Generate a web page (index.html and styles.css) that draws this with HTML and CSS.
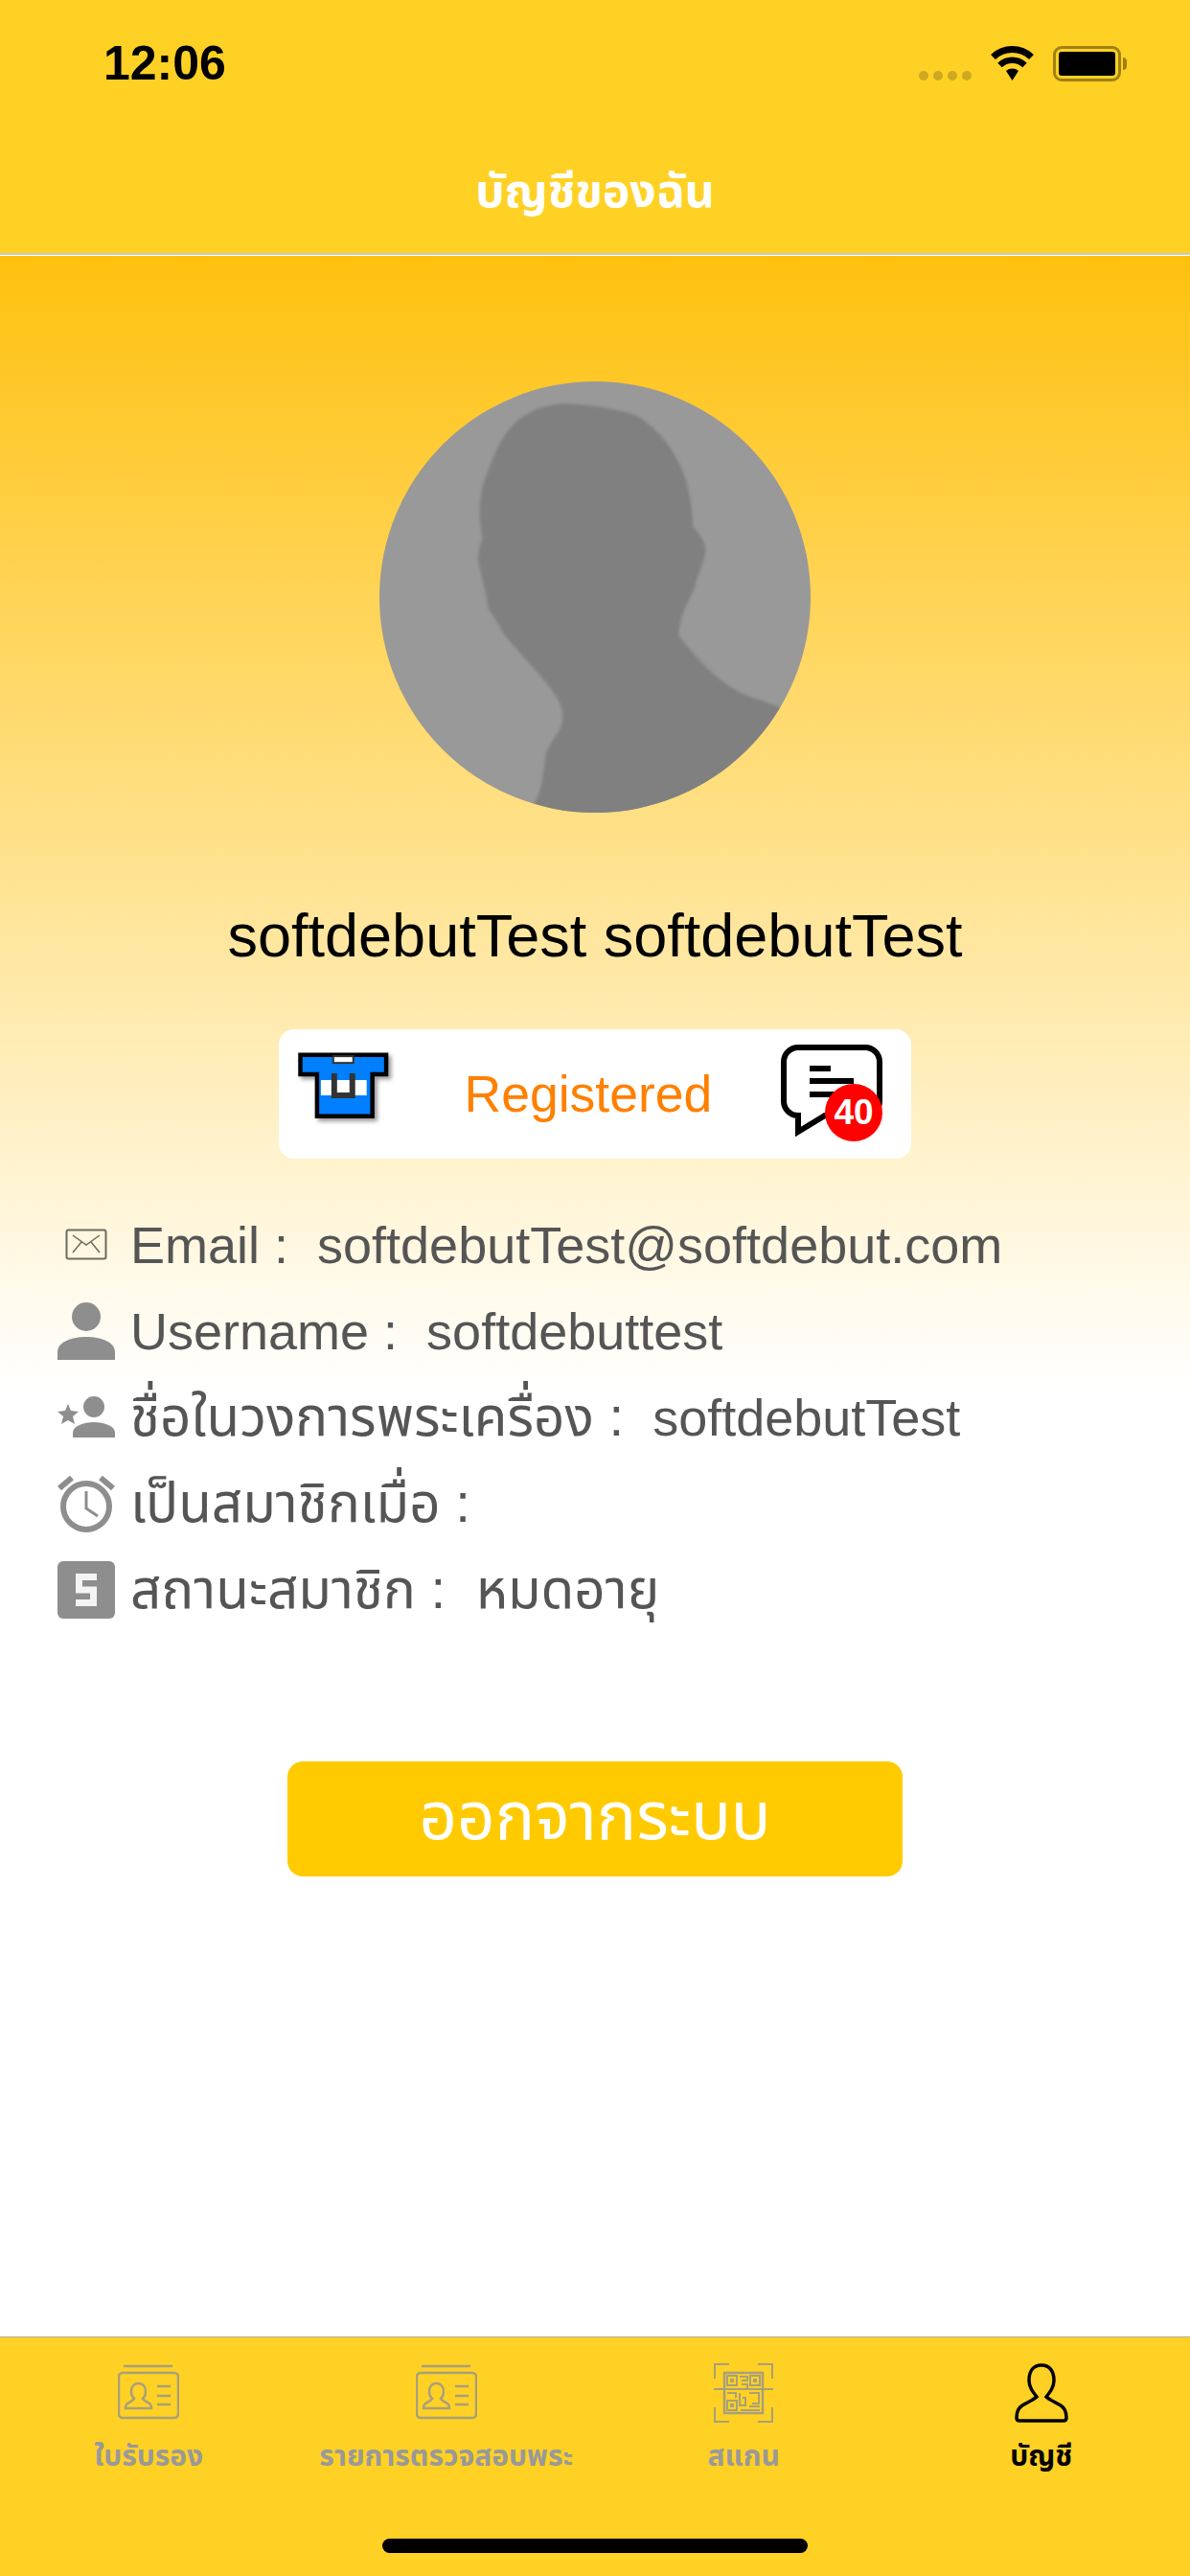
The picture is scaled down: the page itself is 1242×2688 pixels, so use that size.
FILE: index.html
```html
<!DOCTYPE html>
<html lang="th">
<head>
    <meta charset="UTF-8">
    <title>บัญชีของฉัน</title>
    <link rel="stylesheet" href="styles.css">
</head>
<body>
    <div class="top-bar">
        <div class="status-bar">
            <span class="clock">12:06</span>
            <div class="status-icons">
                <div class="signal"><i></i><i></i><i></i><i></i></div>
                <svg class="wifi" width="47" height="36" viewBox="0 0 47 36">
                    <path d="M3.500 11.500a29 29 0 0 1 40 0" fill="none" stroke="#000" stroke-width="7"/>
                    <path d="M10.500 20a19 19 0 0 1 26 0" fill="none" stroke="#000" stroke-width="6.500"/>
                    <path d="M17 26a10 10 0 0 1 13 0L23.500 36z" fill="#000"/>
                </svg>
                <div class="battery"><div class="battery-fill"></div></div>
            </div>
        </div>
        <div class="page-title">บัญชีของฉัน</div>
    </div>

    <div class="content">
        <svg class="avatar" width="450" height="450" viewBox="48 55 1350 1350">
            <defs><clipPath id="avatar-clip"><circle cx="723" cy="730" r="675"/></clipPath></defs>
            <g clip-path="url(#avatar-clip)">
                <rect x="48" y="55" width="1350" height="1350" fill="#999"/>
                <path class="silhouette" fill="#808080" d="M530 1380C555 1340 560 1300 565 1250C570 1200 590 1180 610 1150C630 1110 625 1080 600 1040C570 990 500 920 440 850C420 820 410 790 390 770C385 720 370 680 358 620C355 590 365 560 372 545C360 500 358 440 372 380C395 310 420 250 450 210C490 160 540 135 610 125C680 122 780 140 850 160C900 190 950 240 980 300C1010 350 1025 420 1030 510C1050 530 1070 560 1070 590C1060 630 1045 660 1035 700C1020 740 990 780 985 850C1040 920 1100 990 1180 1030C1220 1050 1270 1060 1300 1075L1420 1120L1420 1440L530 1440Z"/>
            </g>
        </svg>

        <div class="full-name">softdebutTest softdebutTest</div>

        <div class="status-card">
            <svg class="shirt" width="95" height="70" viewBox="0 0 95 70">
                <path d="M2.500 2.500H92.500V23H78V67H20V23H2.500z" fill="#007fff" stroke="#000" stroke-width="4.500"/>
                <rect x="24" y="29" width="48" height="16" fill="#fff"/>
                <rect x="37" y="4" width="21" height="7" fill="#fff" stroke="#333" stroke-width="2"/>
                <path d="M38 22V45H57V22" fill="none" stroke="#333" stroke-width="6"/>
            </svg>
            <span class="status-text">Registered</span>
            <div class="chat">
                <svg width="106" height="97" viewBox="0 0 106 97">
                    <path d="M18 3H88a15 15 0 0 1 15 15v41a15 15 0 0 1-15 15H46L18 91V74a15 15 0 0 1-15-15V18A15 15 0 0 1 18 3z" fill="#fff" stroke="#000" stroke-width="6"/>
                    <path d="M30 25h22M30 38h46M30 52h46" stroke="#000" stroke-width="6"/>
                </svg>
                <span class="chat-badge">40</span>
            </div>
        </div>

        <div class="info-list">
            <div class="info-row">
                <svg class="info-icon" width="60" height="60" viewBox="0 0 60 60">
                    <rect x="9.500" y="14.500" width="41" height="30" rx="2" fill="none" stroke="#6b6b60" stroke-width="2"/>
                    <path d="M16 20l14 10 14-10M16 38l9-11M44 38l-9-11" fill="none" stroke="#6b6b60" stroke-width="1.500"/>
                </svg>
                <span>Email :&nbsp; softdebutTest@softdebut.com</span>
            </div>
            <div class="info-row">
                <svg class="info-icon" width="60" height="60" viewBox="0 0 60 60">
                    <circle cx="30" cy="15" r="15" fill="#8e8e8e"/>
                    <path d="M0 60V52C0 41 15 36 30 36S60 41 60 52V60z" fill="#8e8e8e"/>
                </svg>
                <span>Username :&nbsp; softdebuttest</span>
            </div>
            <div class="info-row">
                <svg class="info-icon" width="60" height="60" viewBox="0 0 60 60">
                    <circle cx="38" cy="19" r="11" fill="#8e8e8e"/>
                    <path d="M16 51V46C16 39 27 35 38 35S60 39 60 46V51z" fill="#8e8e8e"/>
                    <path d="M11 16l3 7 8 1-6 5 2 8-7-4-7 4 2-8-6-5 8-1z" fill="#8e8e8e"/>
                </svg>
                <span><span class="th">ชื่อในวงการพระเครื่อง :</span>&nbsp; softdebutTest</span>
            </div>
            <div class="info-row">
                <svg class="info-icon" width="60" height="60" viewBox="0 0 60 60">
                    <circle cx="30" cy="33" r="24" fill="none" stroke="#8e8e8e" stroke-width="6"/>
                    <path d="M2 14L15 3M58 14L45 3" stroke="#8e8e8e" stroke-width="6"/>
                    <path d="M30 17V35L42 43" fill="none" stroke="#8e8e8e" stroke-width="3"/>
                </svg>
                <span class="th">เป็นสมาชิกเมื่อ :</span>
            </div>
            <div class="info-row">
                <svg class="info-icon" width="60" height="60" viewBox="0 0 60 60">
                    <rect width="60" height="60" rx="6" fill="#8e8e8e"/>
                    <path d="M41 16.500H22.500V30H37.500V43.500H19" fill="none" stroke="#f4f4f4" stroke-width="7"/>
                </svg>
                <span class="th">สถานะสมาชิก :&nbsp; หมดอายุ</span>
            </div>
        </div>

        <button class="logout-btn">ออกจากระบบ</button>
    </div>

    <div class="tab-bar">
        <div class="tab">
            <svg class="tab-icon" width="64" height="62" viewBox="0 0 64 62">
                <path d="M6 3H57" stroke="#a8a07a" stroke-width="2.500"/>
                <rect x="1" y="10" width="62" height="47" rx="4" fill="none" stroke="#a8a07a" stroke-width="2.500"/>
                <path d="M21.500 21c-5 0-7.500 4-7.500 9 0 3 1 5 3 7-2 3-7 4-8 6-1 2-1 3-1 4h27c0-1 0-2-1-4-1-2-6-3-8-6 2-2 3-4 3-7 0-5-2.500-9-7.500-9z" fill="none" stroke="#a8a07a" stroke-width="2.500"/>
                <path d="M41 24h14M41 34h14M41 43h14" stroke="#a8a07a" stroke-width="2.500"/>
            </svg>
            <span class="tab-label">ใบรับรอง</span>
        </div>
        <div class="tab">
            <svg class="tab-icon" width="64" height="62" viewBox="0 0 64 62">
                <path d="M6 3H57" stroke="#a8a07a" stroke-width="2.500"/>
                <rect x="1" y="10" width="62" height="47" rx="4" fill="none" stroke="#a8a07a" stroke-width="2.500"/>
                <path d="M21.500 21c-5 0-7.500 4-7.500 9 0 3 1 5 3 7-2 3-7 4-8 6-1 2-1 3-1 4h27c0-1 0-2-1-4-1-2-6-3-8-6 2-2 3-4 3-7 0-5-2.500-9-7.500-9z" fill="none" stroke="#a8a07a" stroke-width="2.500"/>
                <path d="M41 24h14M41 34h14M41 43h14" stroke="#a8a07a" stroke-width="2.500"/>
            </svg>
            <span class="tab-label">รายการตรวจสอบพระ</span>
        </div>
        <div class="tab">
            <svg class="tab-icon" width="62" height="62" viewBox="0 0 62 62">
                <path d="M16 1H1V16M46 1H61V16M16 61H1V46M46 61H61V46M0 27H62" fill="none" stroke="#a8a07a" stroke-width="2"/>
                <rect x="11" y="10" width="40" height="42" fill="none" stroke="#a8a07a" stroke-width="2.500"/>
                <path d="M14 13h10v10h-10zM38 13h10v10h-10zM14 39h10v10h-10zM18 17h2v2h-2zM42 17h2v2h-2zM18 43h2v2h-2zM27 14h8v4h-6M29 22h6v5M14 31h9v5M27 31v13h6v-8h-3M37 31h10v11h-7M28 49h20M37 45h11" fill="none" stroke="#a8a07a" stroke-width="2"/>
            </svg>
            <span class="tab-label">สแกน</span>
        </div>
        <div class="tab tab-active">
            <svg class="tab-icon" width="56" height="62" viewBox="0 0 56 62">
                <path d="M28 2C19 2 15 9 15 18c0 7 4 12 8 17c-3 3-10 6-15 9-5 3-6 9-6 13 0 2 1 3 3 3h46c2 0 3-1 3-3 0-4-1-10-6-13-5-3-12-6-15-9 4-5 8-10 8-17C41 9 37 2 28 2z" fill="none" stroke="#000" stroke-width="3.500"/>
            </svg>
            <span class="tab-label">บัญชี</span>
        </div>
        <div class="home-bar"></div>
    </div>
</body>
</html>
```

FILE: styles.css
```css
html, body {
    margin: 0;
    padding: 0;
}

body {
    width: 1242px;
    height: 2688px;
    overflow: hidden;
    display: flex;
    flex-direction: column;
    font-family: "Liberation Sans", "Noto Sans Thai", "Noto Sans", sans-serif;
    background: #fff;
}

.top-bar {
    height: 264px;
    background: #ffd124;
    border-bottom: 2px solid #c9c9c0;
    box-shadow: 0 1px 0 #fff;
    position: relative;
}

.status-bar {
    height: 132px;
    padding: 0 72px 0 108px;
    display: flex;
    align-items: center;
    justify-content: space-between;
}

.clock {
    font-size: 50px;
    font-weight: 700;
    color: #000;
}

.status-icons {
    display: flex;
    align-items: center;
    gap: 19px;
}

.signal {
    display: flex;
    gap: 5px;
    align-self: flex-end;
    margin-bottom: 1px;
}

.signal i {
    width: 10px;
    height: 10px;
    border-radius: 50%;
    background: #cfa821;
}

.battery {
    width: 71px;
    height: 37px;
    box-sizing: border-box;
    border: 3px solid #a08012;
    border-radius: 9px;
    padding: 3px;
    position: relative;
}

.battery::after {
    content: "";
    position: absolute;
    right: -9px;
    top: 9px;
    width: 4px;
    height: 13px;
    border-radius: 0 4px 4px 0;
    background: #a08012;
}

.battery-fill {
    height: 100%;
    background: #000;
    border-radius: 3px;
}

.page-title {
    margin-top: 32px;
    text-align: center;
    color: #fff;
    font-size: 48px;
    font-weight: 700;
    line-height: 72px;
}

.content {
    flex: 1;
    display: flex;
    flex-direction: column;
    align-items: center;
    padding-top: 132px;
    background: linear-gradient(#ffc10d 0, #fff 1183px, #fff 100%);
}

.avatar {
    display: block;
}

.silhouette {
    filter: blur(4px);
}

.full-name {
    margin-top: 92px;
    font-size: 63px;
    line-height: 72px;
    color: #000;
}

.status-card {
    margin-top: 62px;
    width: 660px;
    height: 135px;
    box-sizing: border-box;
    padding: 0 30px 0 20px;
    display: flex;
    align-items: center;
    background: #fff;
    border-radius: 16px;
}

.shirt {
    filter: drop-shadow(3px 3px 2px rgba(0, 0, 0, 0.4));
    margin-bottom: 17px;
}

.status-text {
    margin-left: 79px;
    width: 332px;
    font-size: 53.5px;
    color: #ff8000;
}

.chat {
    position: relative;
    width: 106px;
    height: 97px;
    margin-bottom: 6px;
}

.chat svg {
    display: block;
}

.chat-badge {
    position: absolute;
    right: 0;
    bottom: -4px;
    width: 60px;
    height: 60px;
    border-radius: 50%;
    background: #f00;
    color: #fff;
    font-size: 37px;
    font-weight: 700;
    line-height: 60px;
    text-align: center;
}

.info-list {
    margin-top: 45px;
    width: 1122px;
    display: flex;
    flex-direction: column;
}

.info-row {
    height: 90px;
    line-height: 90px;
    display: flex;
    align-items: center;
    gap: 16px;
    font-size: 54px;
    color: #555;
    white-space: nowrap;
}

.th {
    font-size: 56.5px;
}

.info-icon {
    flex: none;
}

.logout-btn {
    margin-top: 134px;
    width: 642px;
    height: 120px;
    border: none;
    border-radius: 16px;
    background: #ffcb00;
    color: #fff;
    font-family: inherit;
    font-size: 69px;
}

.tab-bar {
    height: 249px;
    border-top: 1px solid #b0b0a8;
    background: #ffd124;
    display: grid;
    grid-template-columns: repeat(4, 1fr);
    position: relative;
}

.tab {
    display: flex;
    flex-direction: column;
    align-items: center;
    padding-top: 27px;
    color: #999;
}

.tab-icon {
    display: block;
}

.tab-label {
    margin-top: 15px;
    font-size: 30px;
    font-weight: 700;
    line-height: 40px;
    white-space: nowrap;
}

.tab-active {
    color: #000;
}

.home-bar {
    position: absolute;
    left: 399px;
    bottom: 24px;
    width: 444px;
    height: 15px;
    border-radius: 8px;
    background: #000;
}
```
